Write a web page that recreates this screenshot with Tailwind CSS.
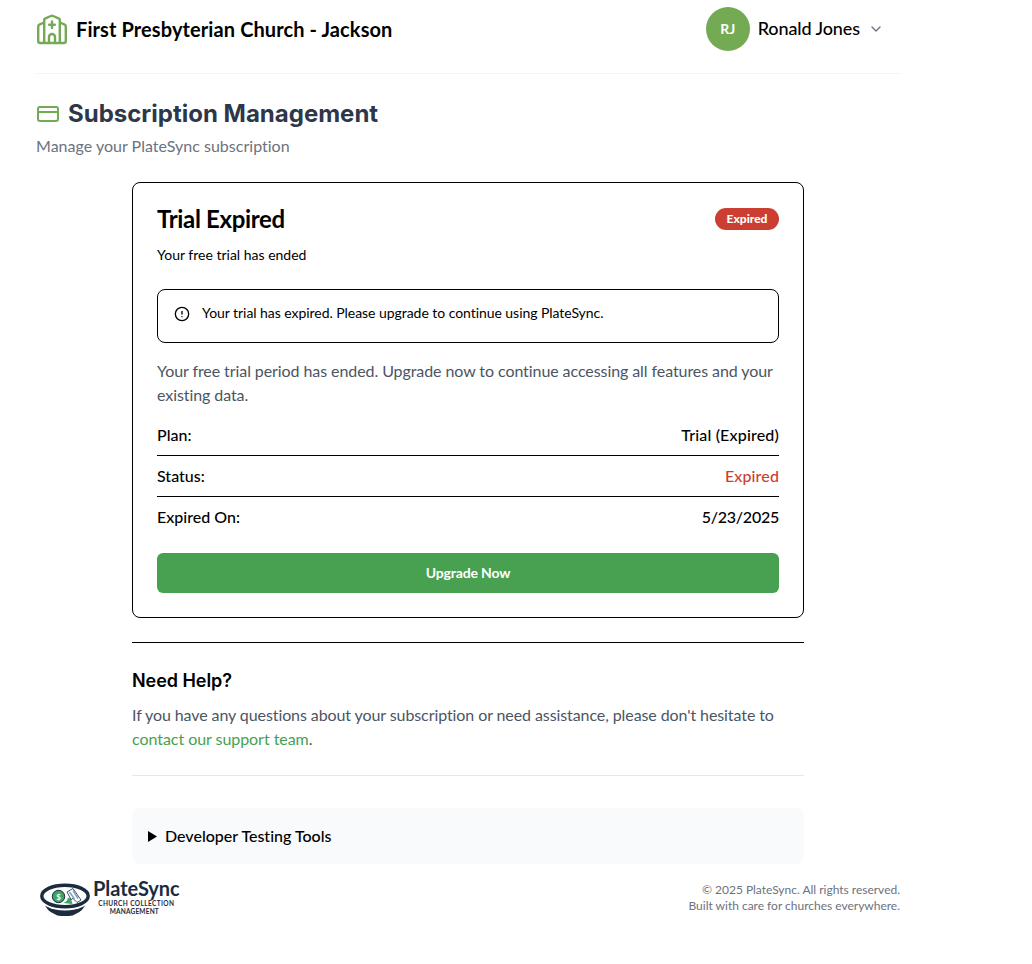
<!DOCTYPE html>
<html lang="en">
<head>
<meta charset="utf-8">
<title>PlateSync - Subscription Management</title>
<script src="https://cdn.jsdelivr.net/npm/@tailwindcss/browser@4"></script>
</head>
<body class="bg-white text-black font-['Lato',sans-serif] text-base [font-variant-ligatures:none]">
<div class="ml-9 w-[865px]">
  <header class="flex h-[74px] items-start justify-between border-b border-gray-100">
    <div class="flex items-start gap-2 pt-[13px]">
      <svg class="size-8" viewBox="0 0 32 32" fill="none" stroke="#74aa53" stroke-width="2.4" stroke-linecap="round" stroke-linejoin="round"><path d="M8.200 30V6.800Q8.200 6 9 5.600L14.800 3q1.200-.6 2.400 0L23 5.600q.8.400.8 1.200V30M8.200 9.500 3.800 11.300Q2.200 12 2.200 13.500V28q0 2 2 2h23.600q2 0 2-2V13.500q0-1.500-1.600-2.200L23.800 9.500M16 8.500v6.500M13.200 11.700h5.600M13 30v-6a3 3 0 0 1 6 0v6"/></svg>
      <span class="text-xl font-bold leading-8 tracking-[0.100px]">First Presbyterian Church - Jackson</span>
    </div>
    <div class="flex items-center pr-[17px] pt-[7px]">
      <span class="flex size-11 items-center justify-center rounded-full bg-[#74aa53] text-sm font-bold text-white">RJ</span>
      <span class="-mt-[2px] ml-2 text-lg font-medium tracking-[-0.100px]">Ronald Jones</span>
      <svg class="ml-2 size-4" viewBox="0 0 24 24" fill="none" stroke="#6b7280" stroke-width="2" stroke-linecap="round" stroke-linejoin="round"><path d="m6 9 6 6 6-6"/></svg>
    </div>
  </header>
  <h2 class="mt-6 flex h-8 items-center gap-2 font-['Inter',sans-serif] text-2xl font-bold text-[#2d3748]">
    <svg class="size-6" viewBox="0 0 24 24" fill="none" stroke="#74aa53" stroke-width="2" stroke-linecap="round" stroke-linejoin="round"><rect x="2" y="5" width="20" height="14" rx="2"/><path d="M2 10h20"/></svg>
    <span>Subscription Management</span>
  </h2>
  <p class="mt-1 leading-6 tracking-[0.015px] text-[#6b7280]">Manage your PlateSync subscription</p>
  <main class="ml-24 mt-6 w-[672px]">
    <section class="h-[436px] rounded-lg border border-black px-6 pt-5">
      <div class="flex items-center justify-between">
        <h3 class="text-2xl font-bold leading-8 tracking-[-0.330px]">Trial Expired</h3>
        <span class="flex h-[22px] w-16 items-center justify-center rounded-full bg-[#cc3e31] text-xs font-black text-white">Expired</span>
      </div>
      <p class="mt-[10px] text-sm leading-5">Your free trial has ended</p>
      <div class="mt-6 flex h-[54px] gap-3 rounded-lg border border-black px-4 pt-4">
        <svg class="size-4" viewBox="0 0 24 24" fill="none" stroke="black" stroke-width="2" stroke-linecap="round"><circle cx="12" cy="12" r="10"/><path d="M12 8v4M12 16h.01"/></svg>
        <p class="-mt-[3px] text-sm leading-5 tracking-[-0.050px]">Your trial has expired. Please upgrade to continue using PlateSync.</p>
      </div>
      <p class="mt-4 leading-6 tracking-[-0.080px] text-[#4b5563]">Your free trial period has ended. Upgrade now to continue accessing all features and your existing data.</p>
      <dl class="mt-2 leading-6">
        <div class="flex justify-between border-b border-black py-2"><dt class="font-medium">Plan:</dt><dd class="font-medium tracking-[0.170px]">Trial (Expired)</dd></div>
        <div class="flex justify-between border-b border-black py-2"><dt class="font-medium">Status:</dt><dd class="font-medium tracking-[0.120px] text-[#cc3e31]">Expired</dd></div>
        <div class="flex justify-between py-2"><dt class="font-medium">Expired On:</dt><dd class="font-medium tracking-[-0.250px]">5/23/2025</dd></div>
      </dl>
      <button class="mt-4 block h-10 w-full rounded-md bg-[#48a150] text-sm font-bold tracking-[-0.150px] text-white">Upgrade Now</button>
    </section>
    <section class="mt-6 border-t border-black pt-6">
      <h3 class="font-['Inter',sans-serif] text-lg font-semibold leading-7 tracking-[-0.050px]">Need Help?</h3>
      <p class="mt-2 leading-6 tracking-[-0.090px] text-[#4b5563]">If you have any questions about your subscription or need assistance, please don't hesitate to <a class="tracking-[-0.050px] text-[#48a150]">contact our support team</a>.</p>
    </section>
    <div class="mt-6 border-t border-gray-200 pt-8">
      <div class="flex h-14 items-center rounded-lg bg-gray-50 pl-4">
        <svg class="mr-2 h-[11px] w-[9px]" viewBox="0 0 9 11"><path d="M0 0 9 5.500 0 11z"/></svg>
        <span class="font-medium">Developer Testing Tools</span>
      </div>
    </div>
  </main>
  <footer class="mt-3 flex h-12 justify-between pr-px">
    <div class="flex w-[144px] text-[#1b2b40]">
      <svg class="ml-1 mt-[5px] h-[38px] w-[50px] shrink-0" viewBox="0 0 50 38"><path d="M3.500 21h43q-3 9-11 12-2.500 2-6.500 2h-8q-4 0-6.500-2-8-3-11-12z" fill="#1b2b40"/><ellipse cx="25" cy="16" rx="26" ry="13.500" fill="#fff"/><ellipse cx="25" cy="15" rx="23.200" ry="10.800" fill="#fff" stroke="#1b2b40" stroke-width="3.400"/><path d="M23.500 22q4-1.500 4.500-5.500l3 1.500 1.500 5z" fill="#3aa568"/><path d="m27 11 6-3.500 8 11.500-4 2.500-4-4-2 1z" fill="#fff" stroke="#1b2b40" stroke-width=".8"/><path d="m29.500 11 5 7M33 9.500l5 8" stroke="#7da3bd" stroke-width="1.500"/><circle cx="18.500" cy="15.500" r="6.200" fill="#3aa568" stroke="#1b2b40"/><text x="18.500" y="18.500" font-size="8" font-weight="700" text-anchor="middle" fill="#fff">$</text></svg>
      <div class="ml-[3px] flex flex-col items-center">
        <span class="text-[20px] font-bold leading-6 tracking-[-0.050px]">PlateSync</span>
        <span class="text-[6.500px] font-bold leading-2 tracking-[0.400px]">CHURCH COLLECTION</span>
        <span class="mr-1 text-[6.500px] font-bold leading-2 tracking-[0.200px]">MANAGEMENT</span>
      </div>
    </div>
    <p class="pt-[6px] text-right text-xs leading-4 tracking-[-0.010px] text-[#6b7280]">© 2025 PlateSync. All rights reserved.<br>Built with care for churches everywhere.</p>
  </footer>
</div>
</body>
</html>
